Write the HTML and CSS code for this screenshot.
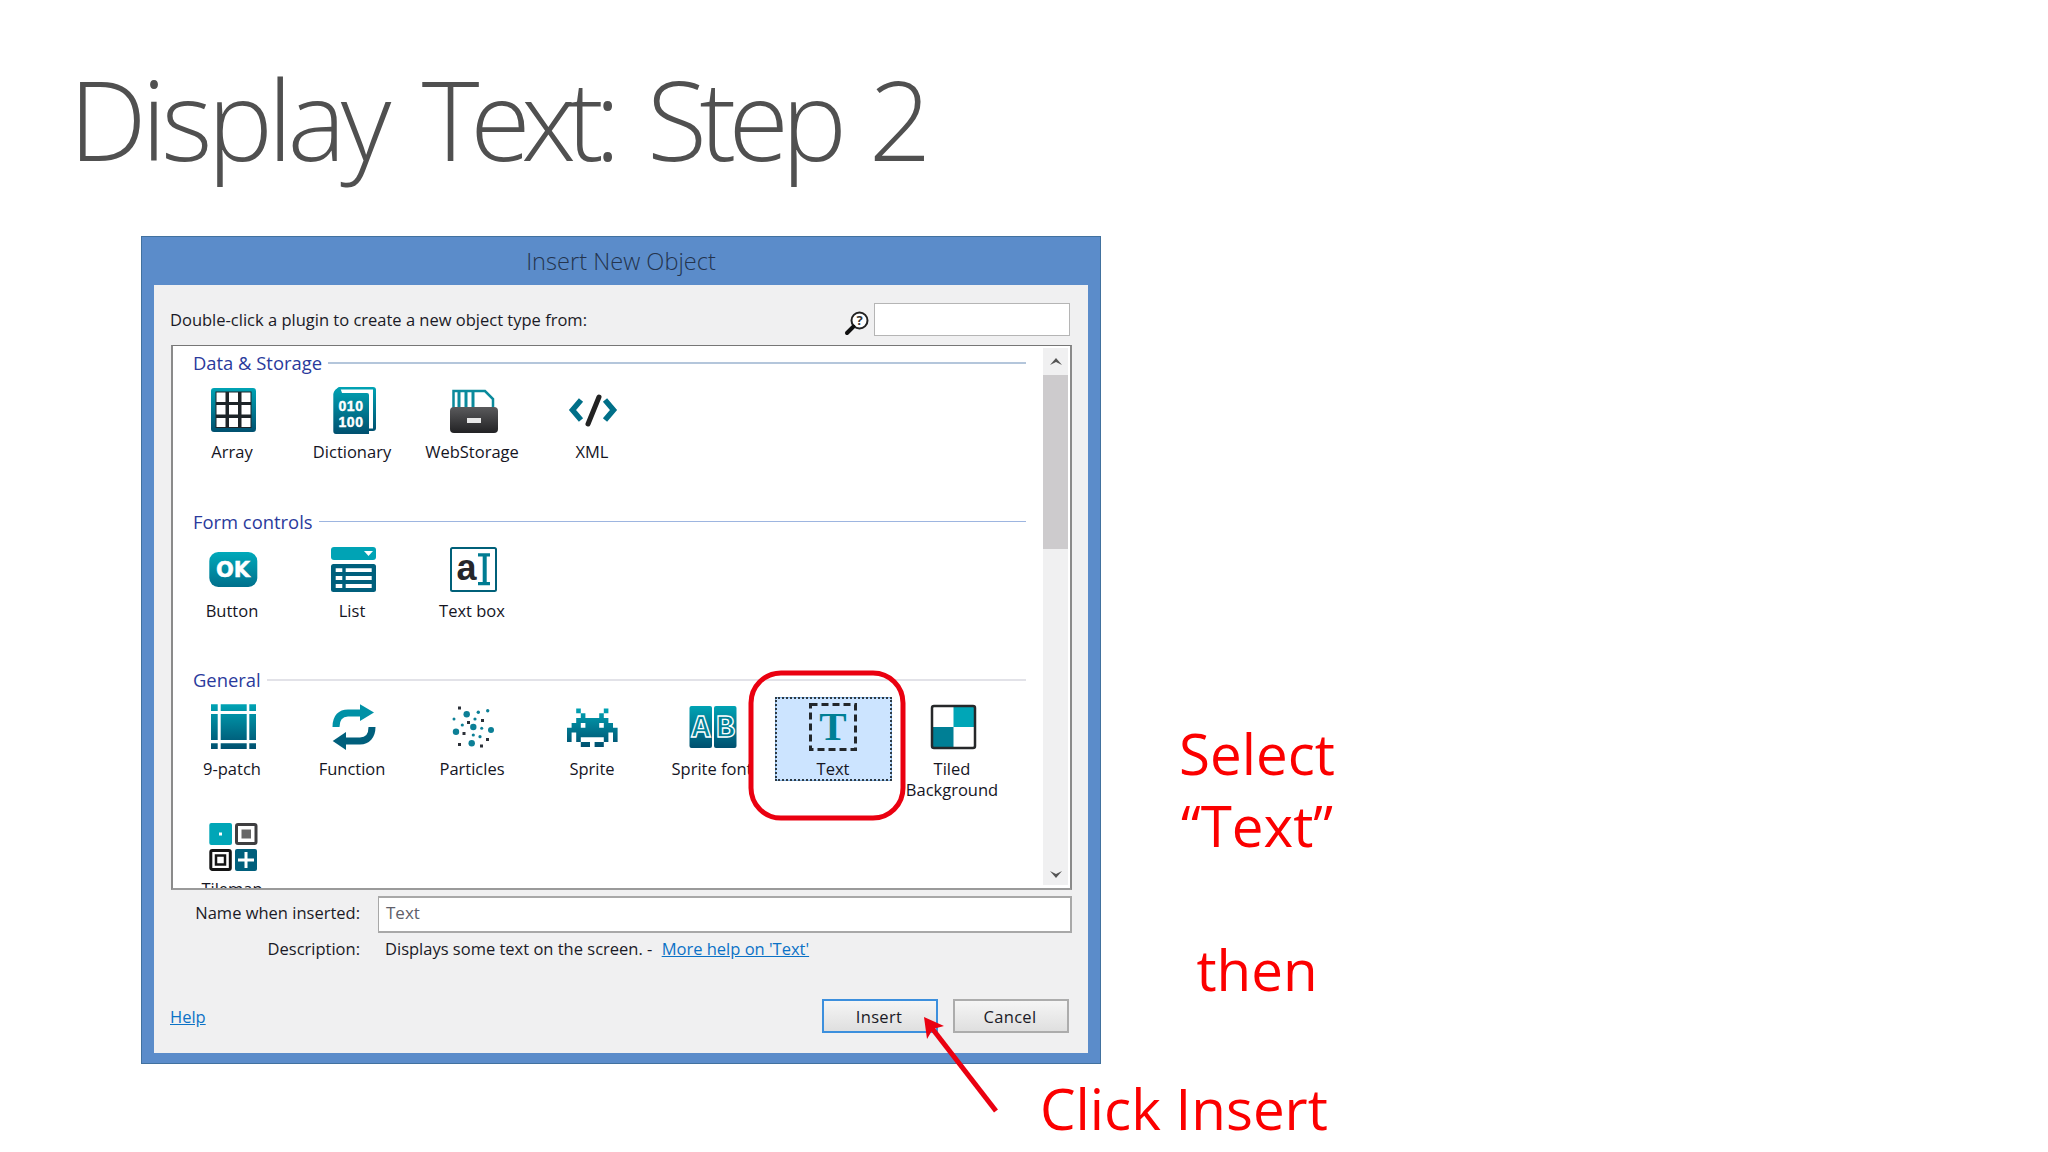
FILE: index.html
```html
<!DOCTYPE html>
<html lang="en">
<head>
<meta charset="utf-8">
<title>Display Text: Step 2</title>
<link rel="stylesheet" href="styles.css">
</head>
<body>
<main class="slide">
  <h1 class="slide-title">Display <span class="title-text">Text:</span> <span class="title-step">Step</span> 2</h1>

  <section class="dialog">
    <header class="dialog-title">Insert New Object</header>
    <div class="dialog-body">
      <div class="prompt-row">
        <span class="prompt">Double-click a plugin to create a new object type from:</span>
        <svg class="search-icon" viewBox="0 0 26 26"><circle cx="15.5" cy="10.5" r="8" fill="#fff" stroke="#222" stroke-width="2"/><path d="M9.5 16.5 3 23" stroke="#111" stroke-width="4" stroke-linecap="round"/><text x="15.5" y="15" class="search-q">?</text></svg>
        <div class="search-box"></div>
      </div>

      <div class="list-box">
        <div class="list-content">
          <div class="group">
            <div class="group-head line-a"><span>Data &amp; Storage</span></div>
            <div class="items">
              <div class="item">
                <svg class="icon" viewBox="0 0 48 48">
                  <defs>
                    <linearGradient id="teal" x1="0" y1="0" x2="0" y2="1"><stop offset="0" stop-color="#00a3b4"/><stop offset="1" stop-color="#00506f"/></linearGradient>
                    <linearGradient id="dark" x1="0" y1="0" x2="0" y2="1"><stop offset="0" stop-color="#5a5a5c"/><stop offset="1" stop-color="#222224"/></linearGradient>
                    <linearGradient id="btn" x1="0" y1="0" x2="0" y2="1"><stop offset="0" stop-color="#00a9ba"/><stop offset="1" stop-color="#00708c"/></linearGradient>
                  </defs>
                  <rect x="3" y="2" width="45" height="44" rx="3" fill="url(#teal)"/>
                  <rect x="7.5" y="5.5" width="36" height="36.5" fill="#1d2428"/>
                  <path fill="#fff" d="M8.5 6.5h9v9.500h-9zM21 6.500h9v9.500h-9zM33.500 6.500h9v9.500h-9zM8.500 19h9v9.500h-9zM21 19h9v9.500h-9zM33.500 19h9v9.500h-9zM8.500 32h9v9h-9zM21 32h9v9h-9zM33.500 32h9v9h-9z"/>
                </svg>
                <span class="label">Array</span>
              </div>
              <div class="item">
                <svg class="icon" viewBox="0 0 48 48">
                  <rect x="9" y="1" width="39" height="44" rx="3" fill="url(#teal)"/>
                  <rect x="12" y="3.500" width="33" height="39" fill="#fff"/>
                  <path d="M5.300 8 Q6 3 12 1 L14 7 H39 Q41 7 41 9 V48 H8 Q5.300 48 5.300 45z" fill="url(#teal)"/>
                  <text class="bits"><tspan x="23" y="24.500">010</tspan><tspan x="23" y="40.500">100</tspan></text>
                </svg>
                <span class="label">Dictionary</span>
              </div>
              <div class="item">
                <svg class="icon" viewBox="0 0 48 48">
                  <path d="M5.500 24V5H37L45 13V24" fill="#fff" stroke="#0a8a9c" stroke-width="2.500"/>
                  <path d="M11 6v16M18 6v16M25 6v16" stroke="#0a8a9c" stroke-width="3"/>
                  <rect x="2" y="21" width="48" height="26" rx="4" fill="url(#dark)"/>
                  <rect x="19" y="32" width="14" height="5" fill="#e8e8e8"/>
                </svg>
                <span class="label">WebStorage</span>
              </div>
              <div class="item">
                <svg class="icon" viewBox="0 0 48 48">
                  <path d="M13 14 4.500 24 13 34M37 14 45.500 24 37 34" fill="none" stroke="#006f88" stroke-width="5.500"/>
                  <path d="M31 11 20 38" stroke="#222" stroke-width="5" stroke-linecap="round"/>
                </svg>
                <span class="label">XML</span>
              </div>
            </div>
          </div>

          <div class="group">
            <div class="group-head line-b"><span>Form controls</span></div>
            <div class="items">
              <div class="item">
                <svg class="icon" viewBox="0 0 48 48">
                  <rect x="1.300" y="7" width="48" height="35" rx="9" fill="url(#btn)"/>
                  <text x="25" y="32" class="ok">OK</text>
                </svg>
                <span class="label">Button</span>
              </div>
              <div class="item">
                <svg class="icon" viewBox="0 0 48 48">
                  <rect x="3" y="2" width="45" height="13" rx="3" fill="#00a3b5"/>
                  <path d="M36 6h9l-4.500 5z" fill="#fff"/>
                  <rect x="3" y="19" width="45" height="28" rx="2.500" fill="#005f7c"/>
                  <path fill="#fff" d="M7.700 23.300h6.600v3.700h-6.600zM17.700 23.300h26v3.700h-26zM7.700 31h6.600v4h-6.600zM17.700 31h26v4h-26zM7.700 39h6.600v4h-6.600zM17.700 39h26v4h-26z"/>
                </svg>
                <span class="label">List</span>
              </div>
              <div class="item">
                <svg class="icon" viewBox="0 0 48 48">
                  <rect x="3" y="3" width="45" height="43" rx="1.500" fill="#fff" stroke="#006079" stroke-width="2"/>
                  <text x="8.500" y="35" class="glyph-a">a</text>
                  <path d="M30 8.300H42V11.600H38.700V37H42V40.300H30V37H34.700V11.600H30z" fill="#007c92"/>
                </svg>
                <span class="label">Text box</span>
              </div>
            </div>
          </div>

          <div class="group">
            <div class="group-head line-c"><span>General</span></div>
            <div class="items">
              <div class="item">
                <svg class="icon" viewBox="0 0 48 48">
                  <path fill="url(#teal)" d="M3 1.300h6.700v6.700H3zM12.700 1.300h26v6.700h-26zM41.300 1.300H48v6.700h-6.700zM3 11h6.700v26H3zM12.700 11h26v26h-26zM41.300 11H48v26h-6.700zM3 40.300h6.700V46H3zM12.700 40.300h26V46h-26zM41.300 40.300H48V46h-6.700z"/>
                </svg>
                <span class="label">9-patch</span>
              </div>
              <div class="item">
                <svg class="icon" viewBox="0 0 48 48">
                  <path d="M8 24C8 14 13 10 20 10H33" fill="none" stroke="#0091a6" stroke-width="7"/>
                  <path d="M32 1.300 46 9.500 32 18z" fill="#0091a6"/>
                  <path d="M44 24C44 33 39 38 32 38H18" fill="none" stroke="#005f7c" stroke-width="7"/>
                  <path d="M18 29 4.700 38 18 47z" fill="#005f7c"/>
                </svg>
                <span class="label">Function</span>
              </div>
              <div class="item">
                <svg class="icon" viewBox="0 0 48 48">
                  <g fill="#0c7f96">
                    <circle cx="18.700" cy="11.300" r="3.200"/><circle cx="30.300" cy="9.300" r="1.700"/><circle cx="39.700" cy="7.700" r="1.700"/><circle cx="6" cy="16" r="1.500"/><circle cx="27" cy="16" r="1.600"/><circle cx="14.300" cy="22" r="1.600"/><circle cx="25.300" cy="24" r="3.200"/><circle cx="33.700" cy="25.300" r="1.500"/><circle cx="8" cy="28.700" r="3.200"/><circle cx="25.300" cy="32" r="1.600"/><circle cx="32" cy="33.700" r="1.600"/><circle cx="43" cy="27" r="3"/><circle cx="23.700" cy="40.300" r="3.200"/>
                  </g>
                  <g fill="#2c3038">
                    <rect x="10" y="3.500" width="3" height="3"/><rect x="19" y="18" width="3" height="3"/><rect x="33" y="16" width="3" height="3"/><rect x="14.500" y="29" width="3" height="3"/><rect x="38" y="35" width="3" height="3"/><rect x="10" y="40" width="3" height="3"/><rect x="32" y="41.500" width="3" height="3"/>
                  </g>
                </svg>
                <span class="label">Particles</span>
              </div>
              <div class="item">
                <svg class="icon" viewBox="0 0 48 48">
                  <g transform="translate(-1 5.500) scale(4.600 4.800)">
                    <path fill="url(#teal)" d="M2 0h1v1h-1zM8 0h1v1h-1zM3 1h1v1h-1zM7 1h1v1h-1zM2 2h7v1h-7zM1 3h2v1h-2zM4 3h3v1h-3zM8 3h2v1h-2zM0 4h11v1h-11zM0 5h1v1h-1zM2 5h7v1h-7zM10 5h1v1h-1zM0 6h1v1h-1zM2 6h1v1h-1zM8 6h1v1h-1zM10 6h1v1h-1zM3 7h2v1h-2zM6 7h2v1h-2z"/>
                  </g>
                </svg>
                <span class="label">Sprite</span>
              </div>
              <div class="item">
                <svg class="icon" viewBox="0 0 48 48">
                  <rect x="1.500" y="3" width="22.500" height="42" rx="2" fill="url(#teal)"/>
                  <rect x="26" y="3" width="22.500" height="42" rx="2" fill="url(#teal)"/>
                  <text x="12.750" y="34" class="tile-letter">A</text>
                  <text x="37.250" y="34" class="tile-letter">B</text>
                </svg>
                <span class="label">Sprite font</span>
              </div>
              <div class="item is-selected">
                <svg class="icon" viewBox="0 0 48 48">
                  <rect x="1.500" y="1.500" width="45" height="45" fill="none" stroke="#23272b" stroke-width="3" stroke-dasharray="7 4"/>
                  <text x="24" y="37" class="glyph-t">T</text>
                </svg>
                <span class="label">Text</span>
              </div>
              <div class="item">
                <svg class="icon" viewBox="0 0 48 48">
                  <rect x="4" y="3" width="43" height="42" rx="2" fill="#fff"/>
                  <rect x="25.500" y="3" width="21.500" height="21" fill="#00a6b7"/>
                  <rect x="4" y="24" width="21.500" height="21" fill="#007f95"/>
                  <rect x="4" y="3" width="43" height="42" rx="2" fill="none" stroke="#26282a" stroke-width="2.500"/>
                </svg>
                <span class="label">Tiled Background</span>
              </div>
              <div class="item">
                <svg class="icon" viewBox="0 0 48 48">
                  <rect x="1.300" y="0" width="22.700" height="22" rx="2" fill="#00a6b7"/>
                  <rect x="11" y="9.500" width="3" height="3" fill="#fff"/>
                  <rect x="28.500" y="1.500" width="19.500" height="19" rx="1.500" fill="#fff" stroke="#3e3e40" stroke-width="3"/>
                  <rect x="33.500" y="6.500" width="9.500" height="9" fill="#666"/>
                  <rect x="2.800" y="27.500" width="19.500" height="19" rx="1.500" fill="#fff" stroke="#141414" stroke-width="3"/>
                  <rect x="8" y="32.500" width="9" height="9" fill="#fff" stroke="#141414" stroke-width="2.500"/>
                  <rect x="27" y="26" width="22" height="22" rx="2" fill="#005f7c"/>
                  <path d="M36.500 29h3v6.500H46v3h-6.500V45h-3v-6.500H30v-3h6.500z" fill="#fff"/>
                </svg>
                <span class="label">Tilemap</span>
              </div>
            </div>
          </div>
        </div>
        <div class="scrollbar">
          <svg class="scroll-arrow arrow-up" viewBox="0 0 14 10"><path d="M1 9 7 2l6 7-6-3z" fill="#555"/></svg>
          <div class="scroll-thumb"></div>
          <div class="scroll-track"></div>
          <svg class="scroll-arrow arrow-down" viewBox="0 0 14 10"><path d="M1 1l6 7 6-7-6 3z" fill="#555"/></svg>
        </div>
      </div>

      <div class="form-row name-row">
        <span class="form-label">Name when inserted:</span>
        <div class="name-input">Text</div>
      </div>
      <div class="form-row desc-row">
        <span class="form-label">Description:</span>
        <span class="desc-value">Displays some text on the screen. - <a class="link desc-link" href="#">More help on 'Text'</a></span>
      </div>

      <div class="footer-row">
        <a class="link help" href="#">Help</a>
        <div class="buttons">
          <div class="btn btn-default">Insert</div>
          <div class="btn">Cancel</div>
        </div>
      </div>
    </div>
  </section>

  <div class="callout-side">Select<br>“Text”<br><br>then</div>
  <div class="callout-bottom">Click Insert</div>

  <svg class="annotations" viewBox="0 0 2048 1152">
    <rect x="751" y="673" width="152" height="145" rx="30" fill="none" stroke="#ea0010" stroke-width="5"/>
    <path d="M996 1111 931 1027" stroke="#ea0010" stroke-width="5"/>
    <path d="M924 1017 944 1026 933 1029 927 1039z" fill="#ea0010"/>
  </svg>
</main>
</body>
</html>
```

FILE: styles.css
```css
* { box-sizing: border-box; }

body {
  margin: 0;
  background: #fff;
}

.slide {
  position: relative;
  width: 2048px;
  height: 1152px;
  overflow: hidden;
  display: grid;
  grid-template-columns: 141px 960px 1fr;
  grid-template-rows: 236px 828px 1fr;
  font-family: "Open Sans", "Noto Sans", sans-serif;
}

.slide-title {
  grid-column: 1 / 4;
  margin: 0;
  padding: 43px 0 0 69px;
  font-size: 110px;
  line-height: 150px;
  font-weight: 300;
  color: #505050;
  letter-spacing: -5.100px;
  word-spacing: 12px;
  white-space: nowrap;
}

.title-text { letter-spacing: -9.200px; }

.title-step { letter-spacing: -7.600px; margin-right: -6px; }

.dialog {
  grid-column: 2;
  grid-row: 2;
  display: flex;
  flex-direction: column;
  padding: 0 12px 12px;
  background: #5b8cca;
  border: 1px solid #41719f;
}

.dialog-title {
  height: 47px;
  margin-bottom: 1px;
  flex: none;
  display: flex;
  align-items: center;
  justify-content: center;
  font-size: 23.600px;
  font-weight: 300;
  color: #24344e;
}

.dialog-body {
  flex: 1;
  display: flex;
  flex-direction: column;
  padding: 0 17px;
  background: #f0f0f1;
  font-size: 16.500px;
  color: #1a1a26;
}

.prompt-row {
  height: 60px;
  flex: none;
  display: flex;
  align-items: flex-start;
  padding-top: 18px;
}

.prompt { flex: 1; line-height: 34px; margin-left: -1px; }

.search-icon {
  width: 26px;
  height: 26px;
  margin: 7px 4px 0 0;
}

.search-q {
  font-size: 13px;
  font-weight: 700;
  text-anchor: middle;
  fill: #333;
}

.search-box {
  width: 196px;
  height: 33px;
  background: #fff;
  border: 1px solid #b5b5b5;
  margin-right: 1px;
}

.list-box {
  height: 545px;
  flex: none;
  display: flex;
  margin-right: -1px;
  background: #fff;
  border-style: solid;
  border-width: 1px 2px 2px 2px;
  border-color: #767676 #8a8a8a #9a9a9a #8a8a8a;
}

.list-content {
  flex: 1;
  min-width: 0;
  overflow: hidden;
  padding: 6px 17px 0 0;
}

.group { margin-bottom: 10.500px; }

.group-head {
  height: 24px;
  margin: 0 0 4px 20px;
  padding-bottom: 2px;
  display: flex;
  align-items: center;
  gap: 6px;
  font-size: 18.400px;
  line-height: 22px;
  color: #2a3a9c;
}

.group-head::after {
  content: "";
  flex: 1;
  height: 2px;
  background: #b4c6db;
}

.line-b::after { height: 1px; background: #9db5e0; }
.line-c::after { background: #e2e2e8; }

.items {
  display: grid;
  grid-template-columns: repeat(7, 120px);
  grid-auto-rows: 120px;
  align-items: start;
  margin-left: -1px;
}

.item {
  margin: 0 1.500px;
  display: flex;
  flex-direction: column;
  align-items: center;
  padding: 6px 0 2px;
  text-align: center;
}

.item.is-selected {
  margin: 0 0.500px 0 2.500px;
  background: #cce4ff;
  outline: 2px dotted #2c3a44;
  outline-offset: -2px;
  box-shadow: inset 0 0 0 1px #86b4e4;
}

.icon {
  width: 48px;
  height: 48px;
  flex: none;
  overflow: visible;
}

.label {
  margin-top: 7px;
  line-height: 21px;
  color: #15151f;
}

.bits {
  font-family: "Liberation Sans", sans-serif;
  font-size: 14px;
  font-weight: 700;
  fill: #fff;
  stroke: #fff;
  stroke-width: 0.400px;
  text-anchor: middle;
  letter-spacing: 0.600px;
}

.ok {
  font-family: "DejaVu Sans", sans-serif;
  font-size: 21px;
  font-weight: 700;
  fill: #fff;
  stroke: #fff;
  stroke-width: 0.500px;
  text-anchor: middle;
}

.glyph-a {
  font-family: "Liberation Sans", sans-serif;
  font-size: 36px;
  font-weight: 700;
  fill: #26262a;
}

.tile-letter {
  font-family: "Liberation Mono", monospace;
  font-size: 32px;
  font-weight: 700;
  fill: #007f95;
  stroke: #fff;
  stroke-width: 1.300px;
  text-anchor: middle;
}

.glyph-t {
  font-family: "Liberation Serif", serif;
  font-size: 41px;
  font-weight: 700;
  fill: #007f95;
  text-anchor: middle;
}

.scrollbar {
  width: 25px;
  flex: none;
  margin: 2px 2px 3px 0;
  display: flex;
  flex-direction: column;
  align-items: center;
  background: #f0f0f1;
}

.scroll-arrow {
  width: 14px;
  height: 10px;
  flex: none;
}

.arrow-up { margin: 8px 0 9px; }
.arrow-down { margin: 11px 0 5px; }

.scroll-thumb {
  width: 100%;
  height: 174px;
  flex: none;
  background: #cdcbcd;
}

.scroll-track { flex: 1; }

.form-row {
  display: flex;
  flex: none;
}

.form-label {
  width: 189px;
  flex: none;
  text-align: right;
}

.name-row {
  align-items: center;
  margin: 6px -1px 0 0;
  height: 37px;
}

.name-row .form-label { padding-bottom: 5px; }

.name-input {
  flex: 1;
  height: 37px;
  margin-left: 18px;
  padding-left: 7px;
  line-height: 29px;
  font-size: 17px;
  color: #60606a;
  background: #fff;
  border: 1px solid #a8a8a8;
  border-width: 2px 2px 2px 1px;
}

.desc-row {
  margin-top: 5px;
  line-height: 22px;
  height: 22px;
}

.desc-value { margin-left: 25px; }

.desc-link { margin-left: 5px; }

.link {
  color: #0c72c6;
  text-decoration: underline;
}

.footer-row {
  flex: 1;
  display: flex;
  align-items: center;
  justify-content: space-between;
  padding-top: 39px;
  margin-bottom: 20px;
}

.help { margin-left: -1px; }

.buttons {
  display: flex;
  gap: 15px;
  margin-right: 2px;
}

.btn {
  width: 116px;
  height: 34px;
  display: flex;
  align-items: center;
  justify-content: center;
  padding-right: 2px;
  letter-spacing: 0.300px;
  background: linear-gradient(#f5f5f5, #dfdfdf);
  border: 2px solid #acacac;
}

.btn-default { border-color: #3c8fdd; }

.callout-side {
  grid-column: 3;
  grid-row: 2;
  width: 312px;
  padding-top: 482px;
  font-size: 56.500px;
  line-height: 72px;
  color: #fb0000;
  text-align: center;
  white-space: nowrap;
}

.callout-bottom {
  grid-column: 2 / 4;
  grid-row: 3;
  padding: 9px 0 0 899px;
  font-size: 56.500px;
  line-height: 72px;
  color: #fb0000;
  white-space: nowrap;
}

.annotations {
  position: absolute;
  inset: 0;
  width: 2048px;
  height: 1152px;
  pointer-events: none;
}
```
